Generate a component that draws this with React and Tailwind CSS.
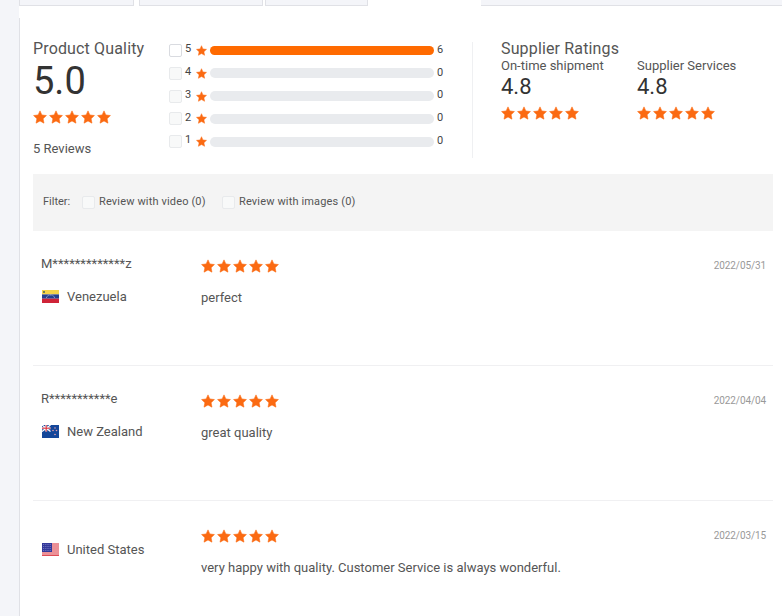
function Star({ size = 14 }) {
  return (
    <svg width={size} height={size} viewBox="0 0 24 24" className="flex-shrink-0" fill="#fb6a12" stroke="#fb6a12" strokeWidth="1" strokeLinejoin="round">
      <path d="M12 1.5l3.2 7 7.8 1-5.7 5.3 1.5 7.7L12 18.7l-6.8 3.8 1.5-7.7L1 9.5l7.8-1z" />
    </svg>
  )
}

function Stars() {
  return (
    <div className="flex gap-[2px]">
      {[0, 1, 2, 3, 4].map((i) => <Star key={i} />)}
    </div>
  )
}

function Venezuela() {
  return (
    <svg width="17" height="13" viewBox="0 0 17 13" className="flex-shrink-0">
      <rect width="17" height="4.4" fill="#f4d34a" />
      <rect y="4.4" width="17" height="4.3" fill="#23408f" />
      <rect y="8.7" width="17" height="4.3" fill="#cf2338" />
      <rect x="1" y="1" width="2" height="2" fill="#6d7d55" />
      <path d="M4.5 8a4 3 0 018 0" fill="none" stroke="#dfe4f5" strokeWidth="0.7" strokeDasharray="1 .6" />
    </svg>
  )
}

function NewZealand() {
  return (
    <svg width="17" height="13" viewBox="0 0 17 13" className="flex-shrink-0">
      <rect width="17" height="13" fill="#14479a" />
      <path d="M0 0l8.5 6.5M8.5 0L0 6.5" stroke="#fff" strokeWidth="1.3" />
      <path d="M4.2 0v6.5M0 3.2h8.5" stroke="#fff" strokeWidth="2" />
      <path d="M4.2 0v6.5M0 3.2h8.5" stroke="#d8232f" strokeWidth="1" />
      <circle cx="13" cy="3" r=".8" fill="#e9a0a8" />
      <circle cx="11" cy="5.5" r=".8" fill="#e9a0a8" />
      <circle cx="14.5" cy="5.5" r=".8" fill="#e9a0a8" />
      <circle cx="13" cy="9.5" r=".8" fill="#e9a0a8" />
    </svg>
  )
}

function UnitedStates() {
  return (
    <svg width="17" height="13" viewBox="0 0 17 13" className="flex-shrink-0">
      <rect width="17" height="13" fill="#fff" />
      <path d="M0 1h17M0 3h17M0 5h17M0 7h17M0 9h17M0 11h17M0 12.7h17" stroke="#d8232f" strokeWidth="1" />
      <rect width="10" height="9" fill="#33389a" />
      <path d="M1 1.5h8M1 3.5h8M1 5.5h8M1 7.5h8" stroke="#7d82c8" strokeWidth=".8" strokeDasharray="1 .8" />
    </svg>
  )
}

const BARS = [
  { n: 5, count: 6, fill: true },
  { n: 4, count: 0 },
  { n: 3, count: 0 },
  { n: 2, count: 0 },
  { n: 1, count: 0 },
]

const REVIEWS = [
  { name: 'M*************z', Flag: Venezuela, country: 'Venezuela', date: '2022/05/31', text: 'perfect' },
  { name: 'R***********e', Flag: NewZealand, country: 'New Zealand', date: '2022/04/04', text: 'great quality' },
  { name: '', Flag: UnitedStates, country: 'United States', date: '2022/03/15', text: 'very happy with quality. Customer Service is always wonderful.' },
]

function Checkbox({ active }) {
  return (
    <span className={`block w-[13px] h-[13px] rounded-[2px] border flex-shrink-0 ${active ? 'bg-white border-[#d9dbe0]' : 'bg-[#f8f9f9] border-[#e8eaec]'}`} />
  )
}

function Tab({ className }) {
  return <div className={`h-[6px] bg-[#f4f5f9] border-b border-r border-l border-[#e0e1e6] ${className}`} />
}

function Review({ review }) {
  const { name, Flag, country, date, text } = review
  return (
    <div className="flex h-[135px] border-b border-[#f0f0f2] pt-[26px] pr-[7px] last:border-b-0">
      <div className="w-[168px] pl-2">
        {name && <p className="text-[13px] leading-[17px] text-[#555] -mt-[2px] mb-[16px]">{name}</p>}
        <div className="flex items-center h-[17px] mt-[14px] text-[13px] text-[#555]">
          <span className="ml-px"><Flag /></span>
          <span className="ml-2">{country}</span>
        </div>
      </div>
      <div className="flex-1">
        <div className="mt-[2px]"><Stars /></div>
        <p className="text-[13px] text-[#555] mt-[16px] leading-[17px]">{text}</p>
      </div>
      <span className="text-[10px] text-[#999] mt-[1px] leading-[15px] tracking-[-0.1px]">{date}</span>
    </div>
  )
}

export default function App() {
  return (
    <div className="w-[782px] h-[616px] overflow-hidden bg-[#f4f5f9] font-['Roboto',sans-serif]">
      <div className="ml-[19px] h-full bg-white flex flex-col">
        {/* tabs */}
        <div className="flex h-[6px] flex-shrink-0">
          <Tab className="w-[115px]" />
          <div className="w-[5px]" />
          <Tab className="w-[124px]" />
          <Tab className="w-[103px] ml-[2px]" />
          <div className="w-[111px] ml-[2px] bg-white" />
          <Tab className="flex-1 border-l-0 border-r-0" />
        </div>

        <div className="flex-1 border-l border-[#e0e1e6] mt-[12px] pl-[13px] pr-[9px]">
          {/* summary */}
          <div className="flex h-[156px] pt-[21px]">
            <div className="w-[136px]">
              <h2 className="text-base leading-[20px] text-[#555] tracking-[0.15px]">Product Quality</h2>
              <p className="text-[38px] leading-[42px] text-[#333] mt-[1px]">5.0</p>
              <div className="mt-[8px]"><Stars /></div>
              <p className="text-[13px] text-[#555] mt-[17px] leading-[16px]">5 Reviews</p>
            </div>

            <div className="w-[303px] flex flex-col gap-[9.8px] pt-[5px]">
              {BARS.map((bar) => (
                <div key={bar.n} className="flex items-center h-[13px]">
                  <Checkbox active={bar.fill} />
                  <span className="w-[11px] ml-[3px] text-[11px] text-[#444] -mt-[2px]">{bar.n}</span>
                  <Star size={11} />
                  <div className={`w-[224px] ml-[3px] rounded-full ${bar.fill ? 'h-[9px] bg-[#ff6a00]' : 'h-[10px] bg-[#e9ebee]'}`} />
                  <span className="ml-[3px] text-[11px] text-[#444] -mt-px">{bar.count}</span>
                </div>
              ))}
            </div>

            <div className="h-[116px] mt-[3px] border-l border-[#eff0f2] pl-[28px] flex-1">
              <h2 className="text-base leading-[20px] text-[#555] -mt-[3px] tracking-[0.15px]">Supplier Ratings</h2>
              <div className="flex">
                <div className="w-[136px]">
                  <p className="text-[13px] leading-[14px] text-[#555]">On-time shipment</p>
                  <p className="text-[22px] leading-[26px] text-[#333] mt-[1px]">4.8</p>
                  <div className="mt-[6px]"><Stars /></div>
                </div>
                <div>
                  <p className="text-[13px] leading-[14px] text-[#555]">Supplier Services</p>
                  <p className="text-[22px] leading-[26px] text-[#333] mt-[1px]">4.8</p>
                  <div className="mt-[6px]"><Stars /></div>
                </div>
              </div>
            </div>
          </div>

          {/* filter */}
          <div className="h-[57px] bg-[#f4f4f4] flex items-center pl-[10px] text-[11px] text-[#555] pb-[1px]">
            <span className="w-[39px]">Filter:</span>
            <Checkbox />
            <span className="ml-[4px] tracking-[0.15px] w-[123px]">Review with video (0)</span>
            <Checkbox />
            <span className="ml-[4px] tracking-[0.15px]">Review with images (0)</span>
          </div>

          {REVIEWS.map((review) => <Review key={review.date} review={review} />)}
        </div>
      </div>
    </div>
  )
}
